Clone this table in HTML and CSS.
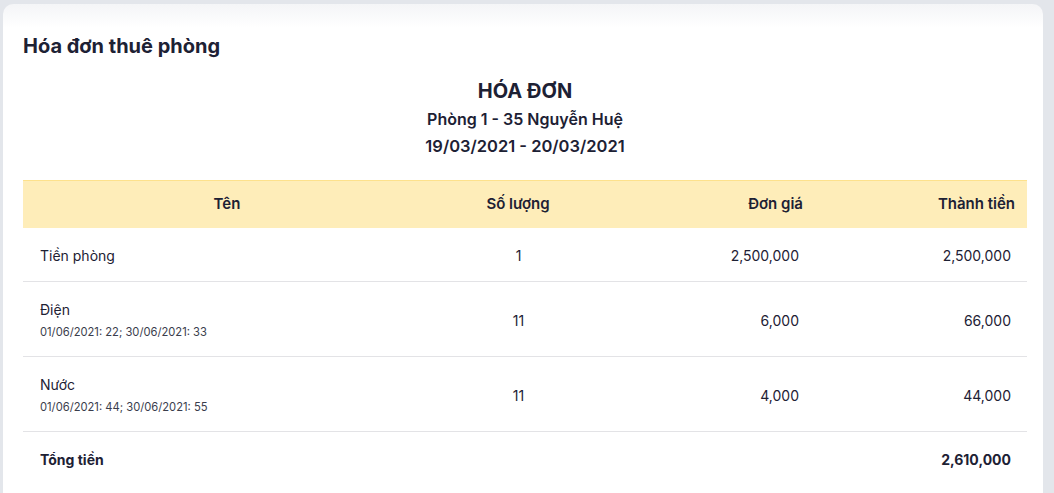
FILE: index.html
```html
<!DOCTYPE html>
<html lang="vi">
<head>
  <meta charset="UTF-8">
  <meta name="viewport" content="width=device-width, initial-scale=1.0">
  <title>Hóa đơn thuê phòng</title>
  <link rel="stylesheet" href="styles.css">
</head>
<body>

  <div class="card">
    <h2 class="card-title">Hóa đơn thuê phòng</h2>

    <div class="invoice-head">
      <h1>HÓA ĐƠN</h1>
      <p class="room">Phòng 1 - 35 Nguyễn Huệ</p>
      <p class="period">19/03/2021 - 20/03/2021</p>
    </div>

    <table class="invoice">
      <colgroup>
        <col class="c-name">
        <col class="c-qty">
        <col class="c-price">
        <col class="c-total">
      </colgroup>
      <thead>
        <tr>
          <th class="center">Tên</th>
          <th class="center">Số lượng</th>
          <th class="right">Đơn giá</th>
          <th class="right">Thành tiền</th>
        </tr>
      </thead>
      <tbody>
        <tr>
          <td>Tiền phòng</td>
          <td class="center">1</td>
          <td class="right">2,500,000</td>
          <td class="right">2,500,000</td>
        </tr>
        <tr>
          <td>Điện<div class="note">01/06/2021: 22; 30/06/2021: 33</div></td>
          <td class="center">11</td>
          <td class="right">6,000</td>
          <td class="right">66,000</td>
        </tr>
        <tr>
          <td>Nước<div class="note">01/06/2021: 44; 30/06/2021: 55</div></td>
          <td class="center">11</td>
          <td class="right">4,000</td>
          <td class="right">44,000</td>
        </tr>
        <tr class="sum">
          <td>Tổng tiền</td>
          <td></td>
          <td></td>
          <td class="right">2,610,000</td>
        </tr>
      </tbody>
    </table>
  </div>

</body>
</html>
```

FILE: styles.css
```css
body {
  font-family: Inter, "Noto Sans", sans-serif;
  background-color: #e3e6eb;
  margin: 0;
  padding: 4px 11px 0 3px;
  color: #1d2134;
}
.card {
  background-color: white;
  background-image: linear-gradient(#f4f5f7, #fff 24px);
  border-radius: 10px 10px 0 0;
  padding: 30px 16px 20px 20px;
  min-height: 470px;
  box-sizing: border-box;
}
.card-title {
  margin: 0;
  font-size: 20px;
  line-height: 24px;
  font-weight: 650;
}
.invoice-head {
  text-align: center;
  margin-top: 19px;
}
.invoice-head h1 {
  margin: 0 0 1px;
  font-size: 20px;
  line-height: 28px;
  font-weight: 700;
}
.invoice-head p {
  margin: 0;
  font-weight: 600;
}
.room {
  font-size: 16px;
  line-height: 27px;
}
.period {
  font-size: 16.5px;
  line-height: 27px;
}
.invoice {
  width: 100%;
  border-collapse: collapse;
  margin-top: 20px;
  font-size: 14px;
}
.c-name { width: 408px; }
.c-qty { width: 174px; }
.c-price { width: 210px; }
.invoice thead tr {
  background-color: #feedb9;
  border-top: 1px solid #fde18c;
}
.invoice th {
  font-size: 15px;
  font-weight: 600;
  padding: 13px 12px 14px;
  line-height: 20px;
}
.invoice td {
  padding: 18px 16px 15px 17px;
  line-height: 20px;
  border-top: 1px solid #e3e3e6;
}
.invoice thead + tbody tr:first-child td {
  border-top: none;
}
.note {
  font-size: 11.2px;
  line-height: 16px;
  margin: 4px 0 1px;
  color: #3a3d4c;
}
.center { text-align: center; }
.right { text-align: right; }
.sum td {
  font-weight: 700;
}
```
